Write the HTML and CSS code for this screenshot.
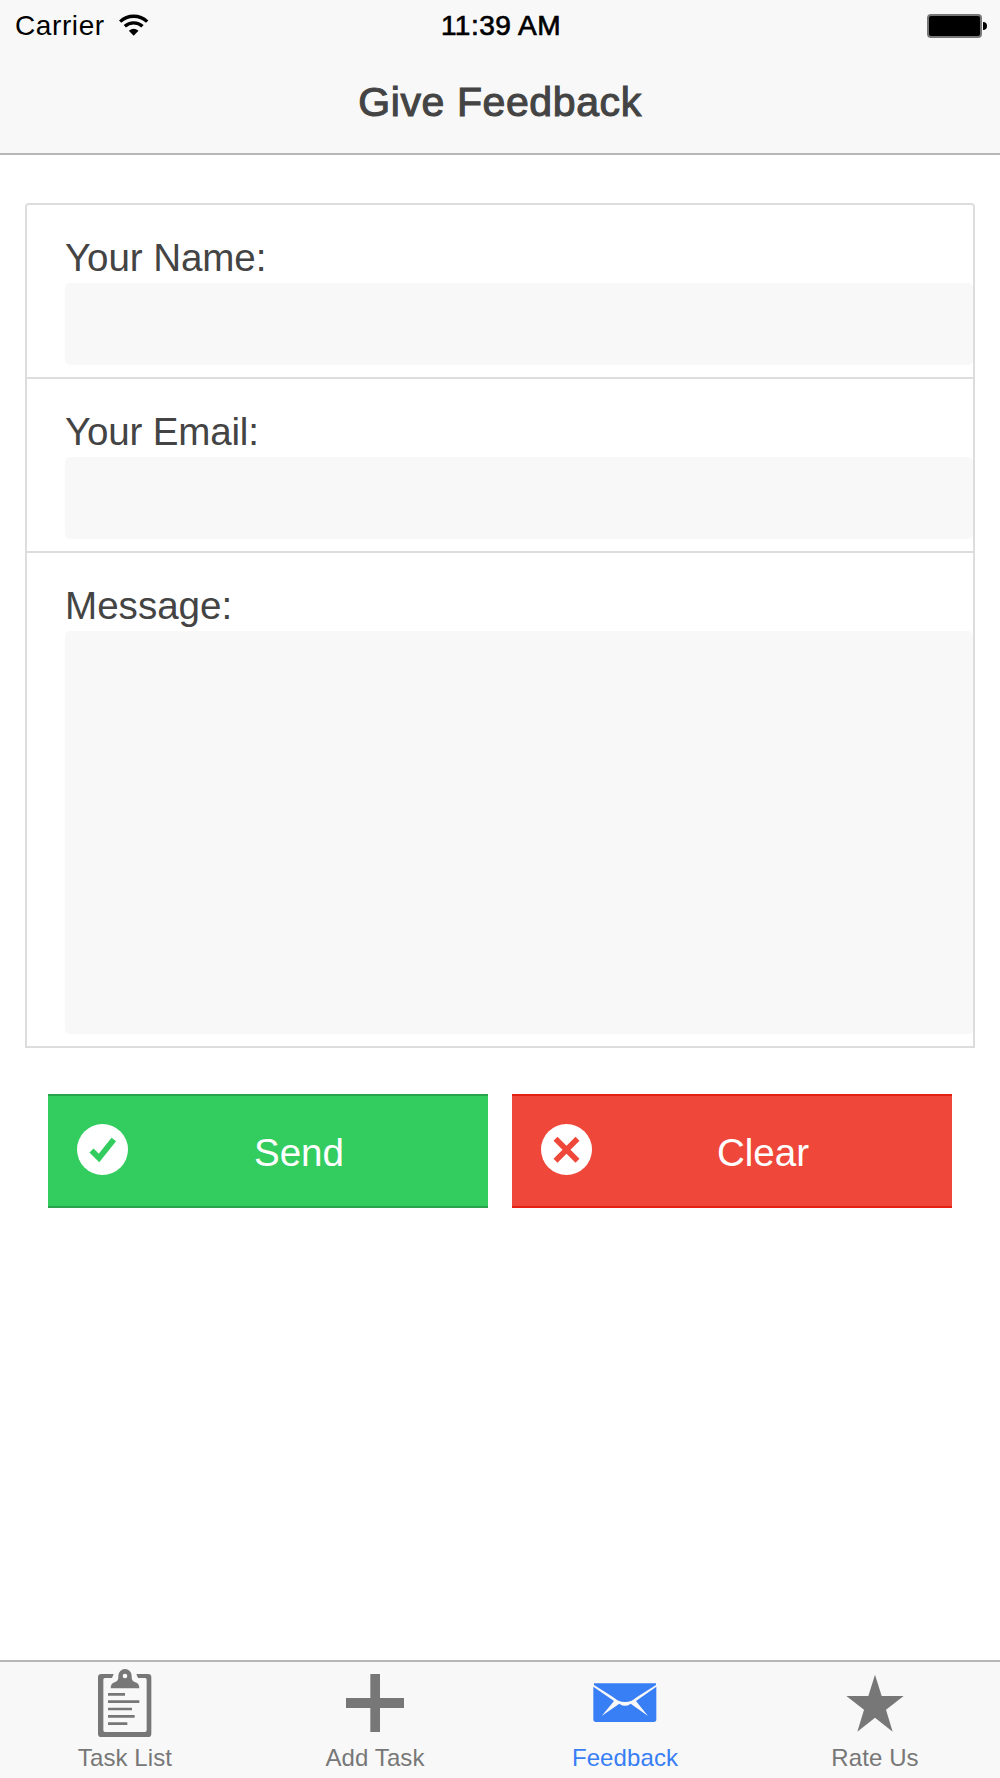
FILE: index.html
```html
<!DOCTYPE html>
<html lang="en">
<head>
  <meta charset="UTF-8">
  <meta name="viewport" content="width=device-width, initial-scale=1.0">
  <title>Give Feedback</title>
  <link rel="stylesheet" href="styles.css">
</head>
<body>
  <header class="header">
    <div class="status-bar">
      <div class="carrier">
        <span class="carrier-name">Carrier</span>
        <svg class="wifi" viewBox="0 0 90 66">
          <path d="M3.5 23A58.5 58.5 0 0 1 84.5 23M17.5 37A38.5 38.5 0 0 1 70.5 37" fill="none" stroke="#000" stroke-width="10"/>
          <path d="M44 65L29.5 50Q44 38 58.5 50Z"/>
        </svg>
      </div>
      <div class="time">11:39 AM</div>
      <div class="battery">
        <span class="battery-body"></span>
        <span class="battery-tip"></span>
      </div>
    </div>
    <h1 class="title">Give Feedback</h1>
  </header>

  <main class="content">
    <form class="feedback">
      <div class="fields">
        <div class="field">
          <label class="label label-name" for="name">Your Name:</label>
          <input class="input" id="name" type="text">
        </div>
        <div class="field">
          <label class="label label-email" for="email">Your Email:</label>
          <input class="input" id="email" type="text">
        </div>
        <div class="field">
          <label class="label label-message" for="message">Message:</label>
          <textarea class="input message" id="message"></textarea>
        </div>
      </div>

      <div class="buttons">
        <button class="button send" type="button">
          <svg class="button-icon" viewBox="0 0 51 51">
            <circle cx="25.5" cy="25.5" r="25.5" fill="#fff"/>
            <path d="M14.5 26.5L22 34L36.8 15.5" fill="none" stroke="#33cd5f" stroke-width="5.8"/>
          </svg>
          <span class="button-text">Send</span>
        </button>
        <button class="button clear" type="button">
          <svg class="button-icon" viewBox="0 0 51 51">
            <circle cx="25.5" cy="25.5" r="25.5" fill="#fff"/>
            <path d="M14.5 14.8L36.5 36.8M36.5 14.8L14.5 36.8" fill="none" stroke="#ef473a" stroke-width="5.6"/>
          </svg>
          <span class="button-text">Clear</span>
        </button>
      </div>
    </form>
  </main>

  <nav class="tabs">
    <a class="tab">
      <svg class="tab-icon" viewBox="0 0 210 210">
        <path d="M71 18L66 30H45Q40 30 40 35V187Q40 192 45 192H165Q170 192 170 187V35Q170 30 165 30H144L139 18H174Q184 18 184 28V197Q184 207 174 207H34Q24 207 24 197V28Q24 18 34 18Z"/>
        <path fill-rule="evenodd" d="M62 61Q62 46 74 43Q85 40 85 27V23A20 20 0 0 1 125 23V27Q125 40 136 43Q148 46 148 61ZM105 17A7 7 0 1 0 105 31A7 7 0 1 0 105 17Z"/>
        <path d="M54 75H105V83H54ZM54 97H148V105H54ZM54 119H126V127H54ZM54 141H134V149H54ZM54 163H112V171H54Z"/>
      </svg>
      <span class="tab-text">Task List</span>
    </a>
    <a class="tab">
      <svg class="tab-icon" viewBox="0 0 210 210">
        <path d="M91 18H120V90H192V120H120V192H91V120H18V90H91Z"/>
      </svg>
      <span class="tab-text">Add Task</span>
    </a>
    <a class="tab active">
      <svg class="tab-icon" viewBox="0 0 210 210">
        <path d="M12 46H198V51L141 87Q133 93 125 98Q105 106 85 98Q77 93 69 87L12 51Z"/>
        <path d="M10 56L72 99L35 144L88 107Q105 120 122 107L174 144L138 99L199 56V154Q199 162 191 162H18Q10 162 10 154Z"/>
      </svg>
      <span class="tab-text">Feedback</span>
    </a>
    <a class="tab">
      <svg class="tab-icon" viewBox="0 0 210 210">
        <path d="M105 20L125 84H191L138 125L158 191L105 149L52 191L72 125L19 84H85Z"/>
      </svg>
      <span class="tab-text">Rate Us</span>
    </a>
  </nav>
</body>
</html>
```

FILE: styles.css
```css
* {
  box-sizing: border-box;
}

body {
  display: flex;
  flex-direction: column;
  height: 1778px;
  margin: 0;
  background-color: #fff;
  color: #444;
  font-family: "Liberation Sans", Helvetica, Arial, sans-serif;
}

/* Header */
.header {
  height: 155px;
  background-color: #f8f8f8;
  border-bottom: 2px solid #b7b7b7;
}

.status-bar {
  display: grid;
  grid-template-columns: 1fr auto 1fr;
  align-items: center;
  height: 50px;
  padding: 0 13px 0 15px;
  color: #000;
  font-size: 28px;
  line-height: 51px;
}

.carrier {
  display: flex;
  align-items: center;
  gap: 14px;
}

.carrier-name {
  letter-spacing: 0.6px;
}

.wifi {
  width: 30px;
  height: 22px;
  margin-top: -2px;
}

.time {
  letter-spacing: 0.5px;
  -webkit-text-stroke: 0.7px #000;
}

.battery {
  display: flex;
  align-items: center;
  justify-content: flex-end;
  gap: 1px;
}

.battery-body {
  width: 55px;
  height: 24px;
  background-color: #000;
  border: 2px solid #777;
  border-radius: 4px;
}

.battery-tip {
  width: 4px;
  height: 8px;
  background-color: #000;
  border-radius: 0 4px 4px 0;
}

.title {
  margin: 0;
  font-size: 41px;
  font-weight: normal;
  letter-spacing: 0.6px;
  line-height: 105px;
  text-align: center;
  -webkit-text-stroke: 1.1px #444;
}

/* Form */
.content {
  flex: 1;
  padding: 48px 25px 0;
}

.fields {
  border: 2px solid #ddd;
  border-radius: 4px 4px 0 0;
}

.field {
  padding: 30px 0 12px 38px;
  border-bottom: 2px solid #ddd;
}

.field:last-child {
  border-bottom: none;
}

.label {
  display: block;
  margin-bottom: 2px;
  font-size: 38.6px;
  line-height: 46px;
}

.label-name {
  letter-spacing: -0.1px;
}

.label-email {
  letter-spacing: -0.2px;
}

.input {
  display: block;
  width: 100%;
  height: 82px;
  padding: 0 10px;
  background-color: #f8f8f8;
  border: none;
  border-radius: 5px;
  font: inherit;
  font-size: 38px;
  outline: none;
  resize: none;
}

.message {
  height: 403px;
}

.buttons {
  display: flex;
  gap: 24px;
  padding: 46px 23px 0;
}

.button {
  display: flex;
  flex: 1;
  align-items: center;
  height: 114px;
  padding: 0 0 0 29px;
  border: solid;
  border-width: 2px 0;
  color: #fff;
  font-family: inherit;
  font-size: 38.6px;
}

.send {
  background-color: #33cd5f;
  border-color: #28a54c;
}

.clear {
  background-color: #ef473a;
  border-color: #e42112;
}

.button-icon {
  width: 51px;
  height: 51px;
  margin-top: -4px;
}

.button-text {
  flex: 1;
  padding: 4px 18px 0 0;
  text-align: center;
}

/* Tabs */
.tabs {
  display: flex;
  height: 118px;
  background-color: #f8f8f8;
  border-top: 2px solid #b7b7b7;
}

.tab {
  display: flex;
  flex: 1;
  flex-direction: column;
  align-items: center;
  padding-top: 6px;
  color: #777;
}

.tab.active {
  color: #387ef5;
}

.tab-icon {
  width: 70px;
  height: 70px;
  fill: currentColor;
}

.tab-text {
  margin-top: 6px;
  font-size: 24px;
  letter-spacing: 0.1px;
  line-height: 28px;
}
```
